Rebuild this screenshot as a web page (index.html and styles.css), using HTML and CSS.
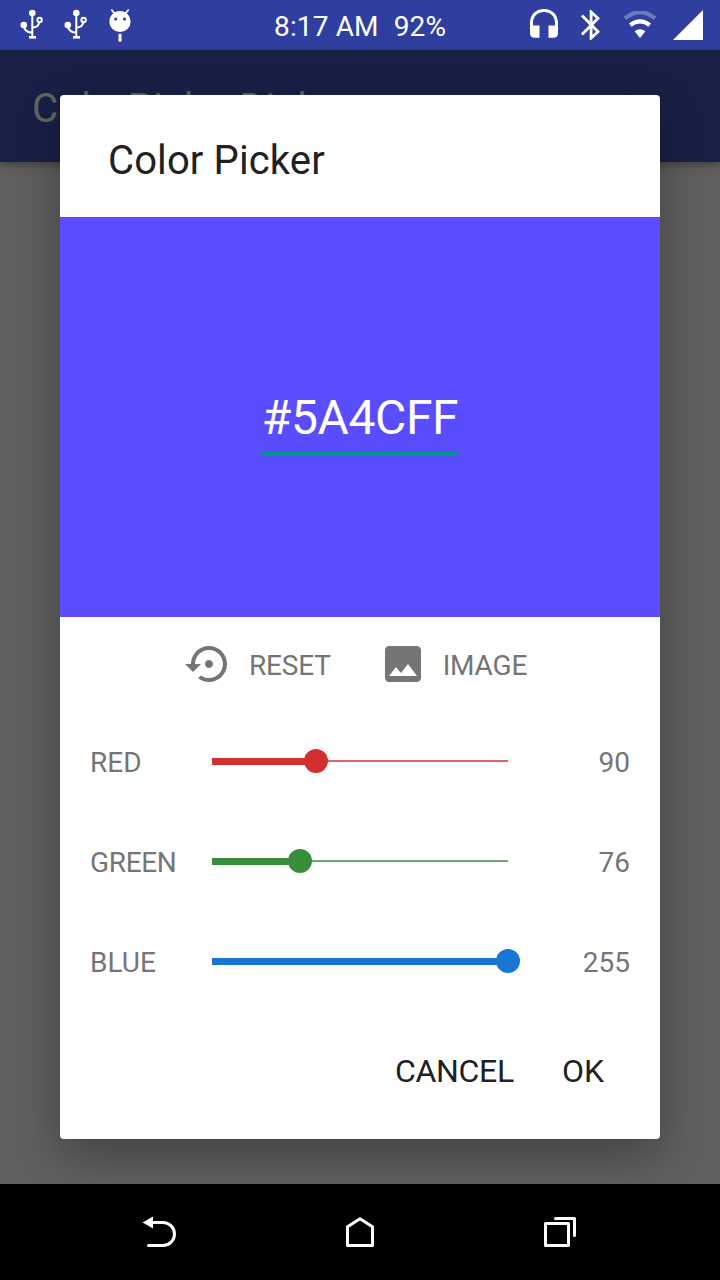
FILE: index.html
```html
<!DOCTYPE html>
<html lang="en">
<head>
<meta charset="utf-8">
<title>Color Picker</title>
<link rel="stylesheet" href="styles.css">
</head>
<body>
<div class="screen">
  <header class="status-bar">
    <div class="notifications">
      <svg class="usb" width="24" height="32" viewBox="0 0 24 32"><g fill="none" stroke="#fff" stroke-width="2"><path d="M12.3 4v24M4 16.5c0 5 3.5 6.8 8 7.3M12.3 18.5c6 0 7.2-4 7.5-6.5"/><circle cx="19.6" cy="11" r="2.2"/></g><circle cx="12.3" cy="4" r="3.3" fill="#fff"/><circle cx="3.8" cy="16" r="3.3" fill="#fff"/><path d="M9 27h7v2.6H9z" fill="#fff"/></svg>
      <svg class="usb" width="24" height="32" viewBox="0 0 24 32"><g fill="none" stroke="#fff" stroke-width="2"><path d="M12.3 4v24M4 16.5c0 5 3.5 6.8 8 7.3M12.3 18.5c6 0 7.2-4 7.5-6.5"/><circle cx="19.6" cy="11" r="2.2"/></g><circle cx="12.3" cy="4" r="3.3" fill="#fff"/><circle cx="3.8" cy="16" r="3.3" fill="#fff"/><path d="M9 27h7v2.6H9z" fill="#fff"/></svg>
      <svg class="android" width="24" height="34" viewBox="0 0 24 34"><circle cx="12" cy="12.5" r="10.6" fill="#fff"/><path d="M3.3 .5l4 4.800M20.700 .5l-4 4.800" stroke="#fff" stroke-width="1.7"/><circle cx="7.700" cy="10" r="1.600" fill="#303f9f"/><circle cx="16.500" cy="10" r="1.600" fill="#303f9f"/><path d="M10.500 24.800h3V32.600h-3z" fill="#fff"/></svg>
    </div>
    <div class="clock"><span class="time">8:17 AM</span><span class="battery">92%</span></div>
    <div class="indicators">
      <svg width="28" height="29" viewBox="0 0 28 29"><path d="M0 14C0 5.500 6 0 14 0s14 5.500 14 14v10q0 4.700-4.700 4.700H18.500V16.500h6.500V14C25 7.300 20.500 3 14 3S3 7.300 3 14v2.500h6.500v12.200H4.700Q0 28.700 0 24z" fill="#fff"/></svg>
      <svg width="20" height="30" viewBox="0 0 20 30"><path d="M1 5.500l16 16.200-6.900 6.300V2L17 8.300 1 24.500" fill="none" stroke="#fff" stroke-width="2.8"/></svg>
      <svg width="32" height="28" viewBox="0 0 32 28"><path d="M1 7.300Q16-4.500 31 7.300" fill="none" stroke="#fff" stroke-opacity=".3" stroke-width="4.200"/><path d="M6.300 14.200q9.700-7.500 19.400 0" fill="none" stroke="#fff" stroke-width="4.200"/><path d="M10.600 20.300q5.400-4.200 10.800 0L16 27z" fill="#fff"/></svg>
      <svg width="30" height="30" viewBox="0 0 30 30"><path d="M30 0v30H0z" fill="#fff"/></svg>
    </div>
  </header>

  <div class="page">
    <div class="app-bar">ColorPickerDialog</div>
  </div>

  <main class="dialog">
    <h1 class="dialog-title">Color Picker</h1>
    <div class="preview"><div class="hex">#5A4CFF</div></div>
    <div class="tools">
      <button class="tool reset">
        <svg width="48" height="48" viewBox="0 0 24 24"><path fill="#757575" d="M14 12c0-1.100-.9-2-2-2s-2 .9-2 2 .9 2 2 2 2-.9 2-2zm-2-9c-4.970 0-9 4.030-9 9H0l4 4 4-4H5c0-3.870 3.130-7 7-7s7 3.130 7 7-3.130 7-7 7c-1.510 0-2.910-.49-4.060-1.300l-1.420 1.440C8.040 20.300 9.940 21 12 21c4.970 0 9-4.030 9-9s-4.030-9-9-9z"/></svg>
        <span>RESET</span>
      </button>
      <button class="tool image">
        <svg width="48" height="48" viewBox="0 0 24 24"><path fill="#757575" d="M21 19V5c0-1.100-.9-2-2-2H5c-1.100 0-2 .9-2 2v14c0 1.100.9 2 2 2h14c1.100 0 2-.9 2-2zM8.500 13.500l2.500 3.010L14.500 12l4.500 6H5l3.500-4.500z"/></svg>
        <span>IMAGE</span>
      </button>
    </div>
    <div class="channels">
      <div class="channel red"><span class="name">RED</span><div class="track"><div class="fill" style="width:104px"></div></div><span class="value">90</span></div>
      <div class="channel green"><span class="name">GREEN</span><div class="track"><div class="fill" style="width:88px"></div></div><span class="value">76</span></div>
      <div class="channel blue"><span class="name">BLUE</span><div class="track"><div class="fill" style="width:296px"></div></div><span class="value">255</span></div>
    </div>
    <div class="actions"><button class="cancel">CANCEL</button><button class="ok">OK</button></div>
  </main>

  <nav class="nav-bar">
    <svg width="36" height="34" viewBox="0 0 36 34"><path d="M.6 7.500L11 1.500v12z" fill="#fff"/><path d="M10 7.500h11a11.500 11.500 0 0 1 0 23H6.500" fill="none" stroke="#fff" stroke-width="3" stroke-linecap="round"/></svg>
    <svg class="home" width="28" height="30" viewBox="0 0 28 30"><path d="M1.500 9.700L14 1.800l12.500 7.900v18.800h-25z" fill="none" stroke="#fff" stroke-width="3" stroke-linejoin="round"/></svg>
    <svg width="32" height="30" viewBox="0 0 32 30"><g fill="none" stroke="#fff" stroke-width="3" stroke-linejoin="round" stroke-linecap="round"><path d="M1.500 6.500h23v22h-23z"/><path d="M11.500 1.500h19v17"/></g></svg>
  </nav>
</div>
</body>
</html>
```
FILE: styles.css
```css
* { box-sizing: border-box; }
body { margin: 0; font-family: Roboto, "Noto Sans", sans-serif; }
svg { display: block; flex: none; }
button { border: 0; padding: 0; background: none; font: inherit; color: inherit; }

.screen {
  position: relative;
  width: 720px;
  height: 1280px;
  display: flex;
  flex-direction: column;
  overflow: hidden;
}

.status-bar {
  height: 50px;
  flex: none;
  display: flex;
  align-items: center;
  background: #303f9f;
  color: #fff;
  font-size: 28px;
}
.notifications { display: flex; gap: 20px; width: 274px; padding-left: 20px; height: 32px; }
.clock { display: flex; gap: 15px; line-height: 33px; padding-top: 2px; white-space: nowrap; width: 256px; letter-spacing: .15px; }
.indicators { display: flex; align-items: center; }
.indicators svg:nth-child(1) { margin-top: -4px; }
.indicators svg:nth-child(2) { margin-left: 23px; }
.indicators svg:nth-child(3) { margin-left: 23px; }
.indicators svg:nth-child(4) { margin-left: 17px; }

.page { flex: 1; background: #606060; }
.app-bar {
  height: 112px;
  padding: 3px 32px 0;
  line-height: 112px;
  font-size: 40px;
  letter-spacing: .15px;
  background: #192046;
  color: #666461;
  box-shadow: 0 3px 8px rgba(0, 0, 0, .35);
}

.dialog {
  position: absolute;
  left: 60px;
  top: 95px;
  width: 600px;
  height: 1044px;
  border-radius: 4px;
  background: #fff;
  box-shadow: 0 16px 48px rgba(0, 0, 0, .32);
  display: flex;
  flex-direction: column;
}
.dialog-title {
  margin: 0;
  height: 122px;
  padding: 42px 48px 0;
  font-size: 40px;
  line-height: 47px;
  font-weight: 400;
  letter-spacing: .12px;
  color: #212121;
}
.preview {
  height: 400px;
  background: #5a4cff;
  display: flex;
  justify-content: center;
  padding-top: 173px;
}
.hex {
  height: 66px;
  line-height: 56px;
  font-size: 48px;
  letter-spacing: -.4px;
  color: #fff;
  border-bottom: 4px solid #009688;
}
.tools {
  height: 94px;
  display: flex;
  color: #757575;
  font-size: 28px;
  padding-left: 125px;
  letter-spacing: -.2px;
}
.tool { display: flex; align-items: center; height: 94px; letter-spacing: -.2px; }
.tool span { margin-left: 16px; padding-top: 2px; }
.image { margin-left: 48px; }

.channels { color: #757575; font-size: 28px; }
.channel {
  height: 100px;
  padding: 0 30px;
  display: grid;
  grid-template-columns: 122px 296px 122px;
  align-items: center;
}
.name, .value { padding-top: 2px; }
.green .name { letter-spacing: -.35px; }
.value { text-align: right; }
.red { --accent: #d32f2f; --rail: #e06666; }
.green { --accent: #388e3c; --rail: #6aab6d; }
.blue { --accent: #1976d2; --rail: #1976d2; }
.track {
  height: 24px;
  background: linear-gradient(var(--rail), var(--rail)) center / 100% 2px no-repeat;
}
.fill {
  height: 24px;
  background: linear-gradient(var(--accent), var(--accent)) center / 100% 7px no-repeat;
}
.fill::after {
  content: "";
  display: block;
  width: 24px;
  height: 24px;
  border-radius: 50%;
  margin-left: calc(100% - 12px);
  background: var(--accent);
}

.actions {
  height: 124px;
  display: flex;
  justify-content: flex-end;
  gap: 48px;
  padding: 0 56px 4px;
  color: #212121;
  font-size: 32px;
}
.cancel { letter-spacing: -.3px; }

.nav-bar {
  position: relative;
  flex: none;
  height: 96px;
  background: #000;
  display: flex;
  align-items: center;
  justify-content: space-between;
  padding: 0 144px 0 142px;
}
.home { margin-right: 2px; }
```
